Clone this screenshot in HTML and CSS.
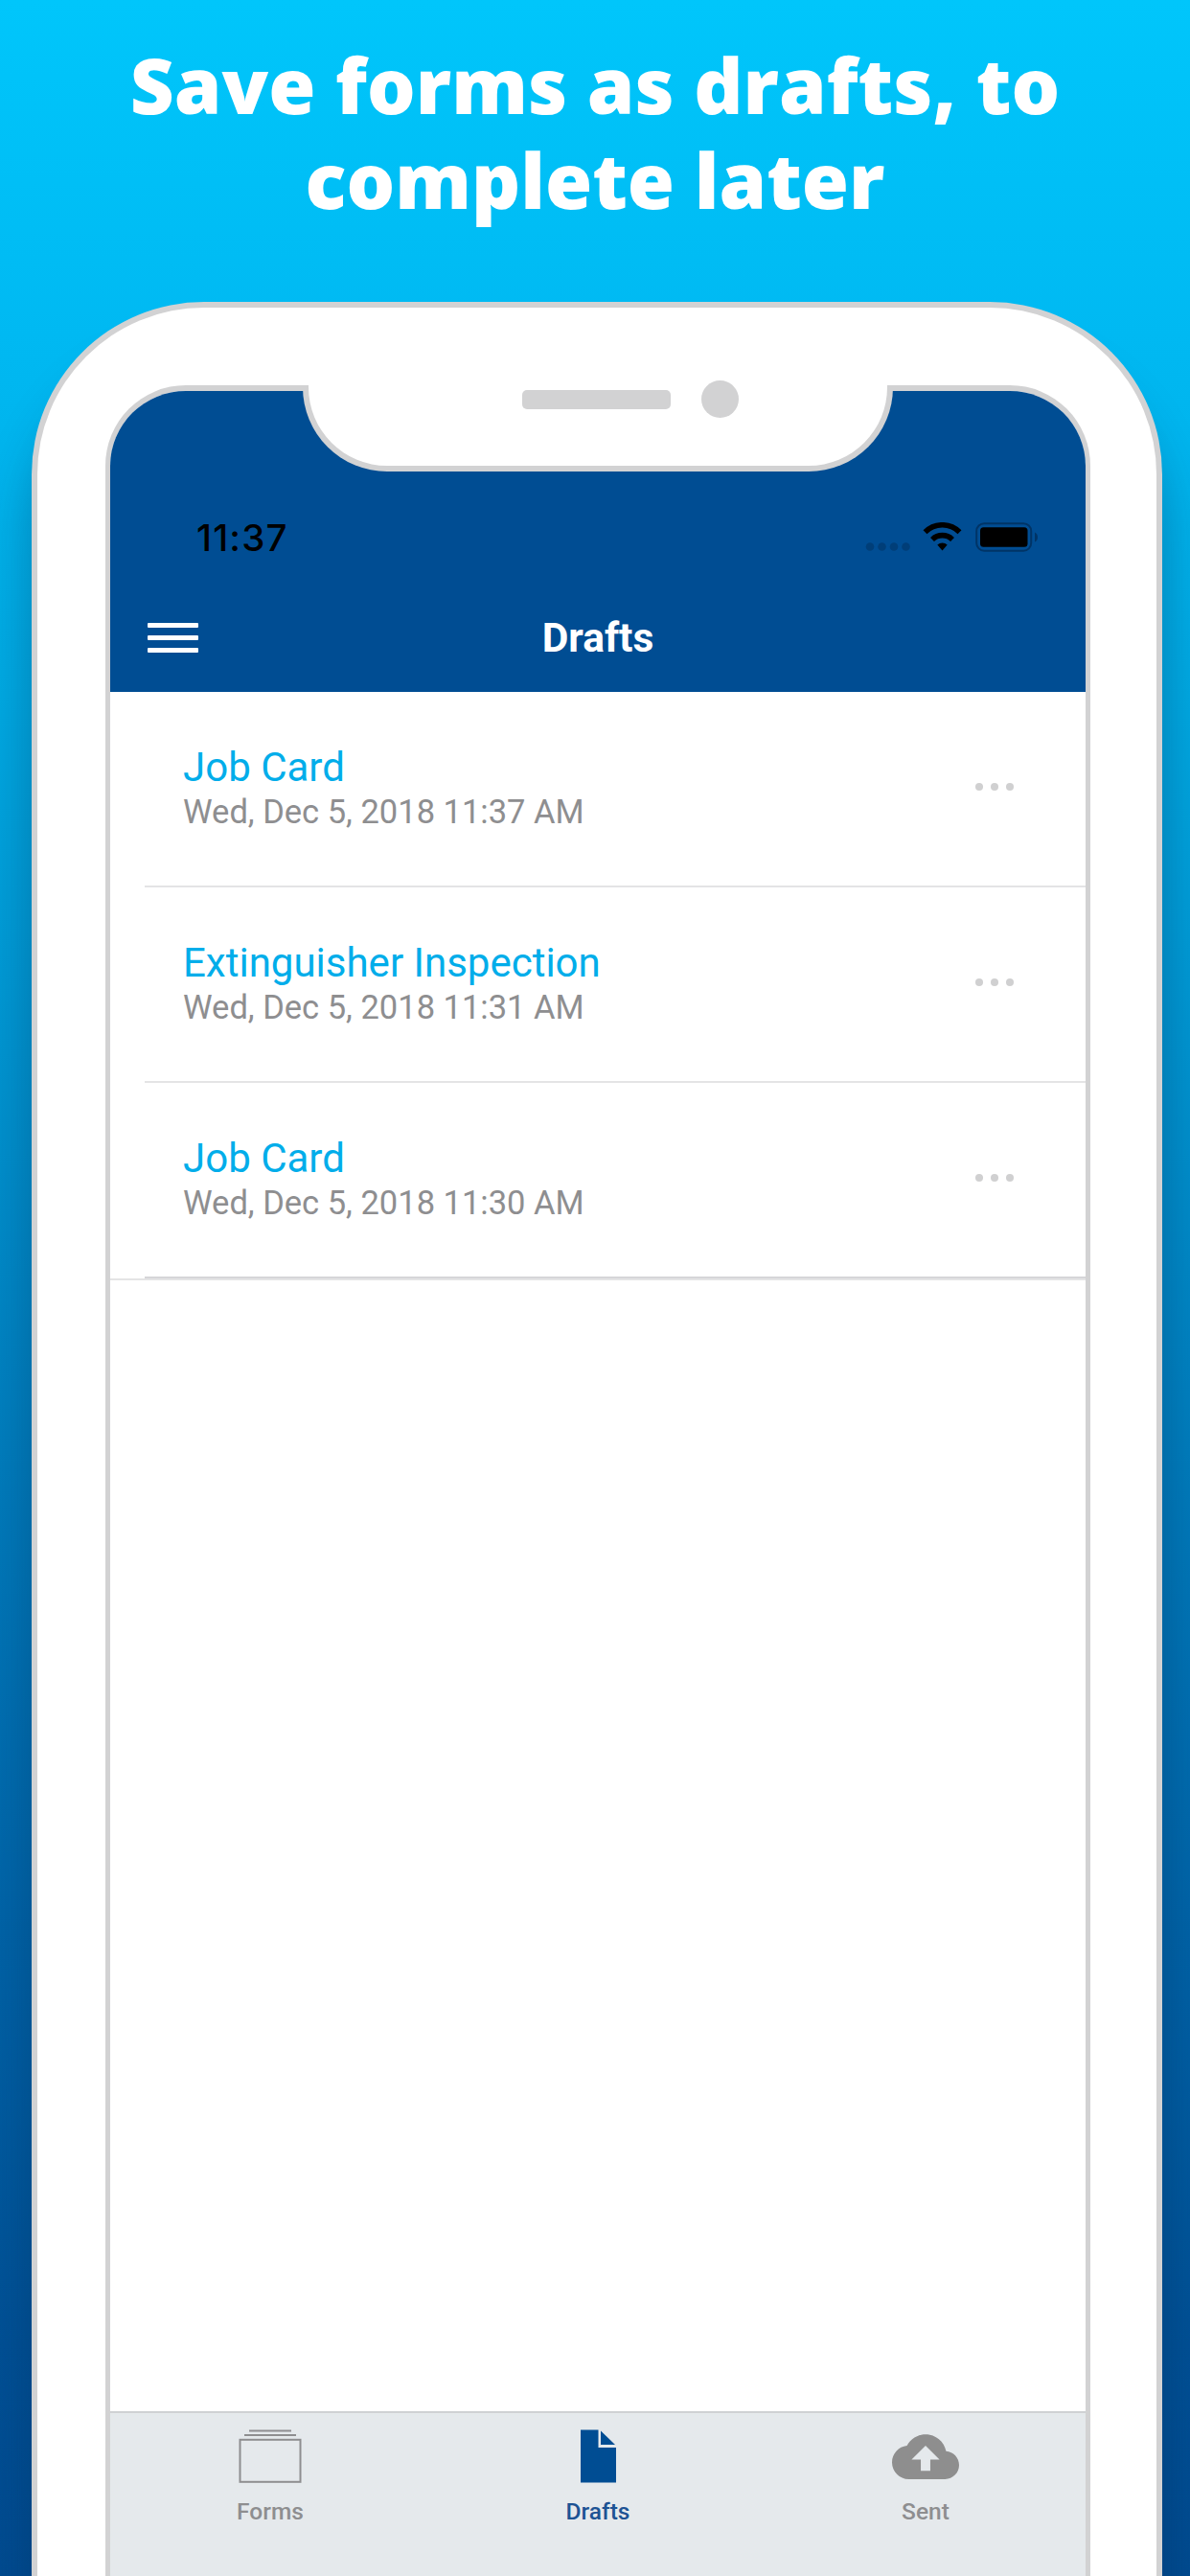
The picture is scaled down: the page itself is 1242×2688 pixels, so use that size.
FILE: index.html
```html
<!DOCTYPE html>
<html lang="en">
<head>
  <meta charset="UTF-8" />
  <meta name="viewport" content="width=device-width, initial-scale=1.0" />
  <title>Drafts</title>
  <link rel="stylesheet" href="styles.css">
</head>
<body>
  <h1 class="headline">Save forms as drafts, to<br>complete later</h1>

  <div class="phone">
    <div class="notch">
      <span class="speaker"></span>
      <span class="camera"></span>
    </div>

    <div class="screen">
      <header>
        <div class="status-bar">
          <span class="time">11:37</span>
          <svg class="status-icons" width="182" height="32" viewBox="0 0 182 32">
            <g fill="#003e78">
              <circle cx="5" cy="25.5" r="4.3"/>
              <circle cx="17.5" cy="25.5" r="4.3"/>
              <circle cx="30" cy="25.5" r="4.3"/>
              <circle cx="42.5" cy="25.5" r="4.3"/>
            </g>
            <g fill="none" stroke="#000" stroke-width="5.6">
              <path d="M62.5 10.2a25.5 25.5 0 0 1 36 0"/>
              <path d="M70 17.9a15 15 0 0 1 21 0"/>
            </g>
            <path d="M75.3 23.5a8 8 0 0 1 10.4 0L80.5 29.5z"/>
            <rect x="116.2" y="1.2" width="57" height="28.5" rx="8" fill="none" stroke="#003466" stroke-width="2"/>
            <rect x="120" y="5.2" width="49.5" height="20.6" rx="3.5"/>
            <path d="M177 10.5q3 1.5 3 5t-3 5z" fill="#003466"/>
          </svg>
        </div>
        <div class="nav-bar">
          <button class="menu" type="button" aria-label="Menu">
            <span></span><span></span><span></span>
          </button>
          <h2>Drafts</h2>
        </div>
      </header>

      <ul class="draft-list">
        <li>
          <div>
            <h3>Job Card</h3>
            <p>Wed, Dec 5, 2018 11:37 AM</p>
          </div>
          <div class="more"><i></i><i></i><i></i></div>
        </li>
        <li>
          <div>
            <h3>Extinguisher Inspection</h3>
            <p>Wed, Dec 5, 2018 11:31 AM</p>
          </div>
          <div class="more"><i></i><i></i><i></i></div>
        </li>
        <li>
          <div>
            <h3>Job Card</h3>
            <p>Wed, Dec 5, 2018 11:30 AM</p>
          </div>
          <div class="more"><i></i><i></i><i></i></div>
        </li>
      </ul>

      <nav class="tab-bar">
        <a class="tab">
          <svg width="66" height="56" viewBox="0 0 66 56" fill="none" stroke="#8e8e90" stroke-width="2">
            <path d="M11 1.5h44M6 6h54"/>
            <rect x="1.5" y="10.8" width="63" height="44"/>
          </svg>
          <span>Forms</span>
        </a>
        <a class="tab active">
          <svg width="37" height="56" viewBox="0 0 37 56" fill="#004d93">
            <path d="M0 .5h18.5V19H37v36.5H0z"/>
            <path d="M21 1.5L36 16H21z"/>
          </svg>
          <span>Drafts</span>
        </a>
        <a class="tab">
          <svg width="70" height="56" viewBox="0 2.2 24 19.2" fill="#8e8e8e">
            <path d="M19.35 10.04C18.67 6.59 15.64 4 12 4 9.11 4 6.6 5.64 5.35 8.04 2.34 8.36 0 10.91 0 14c0 3.31 2.69 6 6 6h13c2.76 0 5-2.24 5-5 0-2.64-2.05-4.78-4.65-4.96zM13.7 13v4h-3.4v-4H7l5-5 5 5h-3.3z"/>
          </svg>
          <span>Sent</span>
        </a>
      </nav>
    </div>
  </div>
</body>
</html>
```
FILE: styles.css
```css
* {
  box-sizing: border-box;
}

body {
  margin: 0;
  height: 2688px;
  overflow: hidden;
  display: flex;
  flex-direction: column;
  background: linear-gradient(#00c6fb 0%, #00b9f2 13%, #00a9e2 27%, #009bd6 37%, #007cbc 57%, #0063a7 75%, #005095 91%, #004b90 100%);
  font-family: Roboto, "Liberation Sans", sans-serif;
}

h1, h2, h3, p, ul {
  margin: 0;
  padding: 0;
}

.headline {
  height: 315px;
  padding-top: 39px;
  text-align: center;
  font-family: "Open Sans", sans-serif;
  font-size: 79.7px;
  font-weight: 800;
  line-height: 99px;
  color: white;
}

/* Phone frame, runs off the bottom of the page */
.phone {
  position: relative;
  flex: 1;
  width: 1180px;
  margin-left: 33px;
  padding: 81px 69px 0 71px;
  border: 6px solid #d2d2d3;
  border-bottom: none;
  border-radius: 180px 180px 0 0;
  background: white;
  box-shadow: 0 60px 50px rgba(0, 40, 80, 0.35);
}

.notch {
  position: absolute;
  top: 81px;
  left: 277px;
  width: 616px;
  height: 90px;
  border: 6px solid #d2d2d3;
  border-top: none;
  border-radius: 0 0 88px 88px;
  background: white;
}

.speaker {
  position: absolute;
  top: 5px;
  left: 223px;
  width: 155px;
  height: 20px;
  border-radius: 5px;
  background: #d2d2d3;
}

.camera {
  position: absolute;
  top: -5px;
  left: 410px;
  width: 39px;
  height: 39px;
  border-radius: 50%;
  background: #d2d2d3;
}

.screen {
  height: 100%;
  display: flex;
  flex-direction: column;
  border: 6px solid #d2d2d3;
  border-width: 6px 5px 0;
  border-radius: 84px 84px 0 0;
  overflow: hidden;
}

header {
  height: 314px;
  padding-top: 134px;
  background: #004d93;
}

.status-bar {
  height: 38px;
  padding: 0 48px 0 90px;
  display: flex;
  align-items: center;
  justify-content: space-between;
}

.time {
  font-family: Inter, sans-serif;
  font-size: 38.5px;
  font-weight: 500;
  letter-spacing: 1.2px;
  color: black;
}

.nav-bar {
  height: 142px;
  padding: 29px 39px 0;
  display: grid;
  grid-template-columns: 54px 1fr 54px;
  align-items: center;
}

.menu {
  display: flex;
  flex-direction: column;
  gap: 8px;
  padding: 0;
  border: none;
  background: none;
}

.menu span {
  width: 53px;
  height: 5px;
  border-radius: 1px;
  background: white;
}

h2 {
  text-align: center;
  font-size: 42.5px;
  font-weight: 700;
  color: white;
}

.draft-list {
  list-style: none;
  border-bottom: 2px solid #e4e4e5;
}

.draft-list li {
  height: 204px;
  margin-left: 36px;
  padding: 0 75px 2px 40px;
  display: flex;
  align-items: center;
  justify-content: space-between;
  border-bottom: 2px solid #e4e4e5;
}

.draft-list li:last-child {
  border-bottom-color: #d6d6d8;
}

h3 {
  font-size: 42px;
  font-weight: 400;
  line-height: 49px;
  color: #00adea;
}

.draft-list p {
  font-size: 34.5px;
  line-height: 44px;
  color: #8e8e90;
}

.more {
  display: flex;
  gap: 8px;
  margin-top: -2px;
}

.more i {
  width: 8px;
  height: 8px;
  border-radius: 50%;
  background: #d0d0d1;
}

.tab-bar {
  height: 172px;
  margin: auto -4px 0;
  padding-top: 17px;
  display: flex;
  border-top: 2px solid #cfd1d3;
  background: #e5e9ec;
}

.tab {
  flex: 1;
  display: flex;
  flex-direction: column;
  align-items: center;
  gap: 15px;
  font-size: 24.5px;
  font-weight: 500;
  line-height: 30px;
  color: #8e8e90;
}

.active {
  color: #1d5394;
}
```
